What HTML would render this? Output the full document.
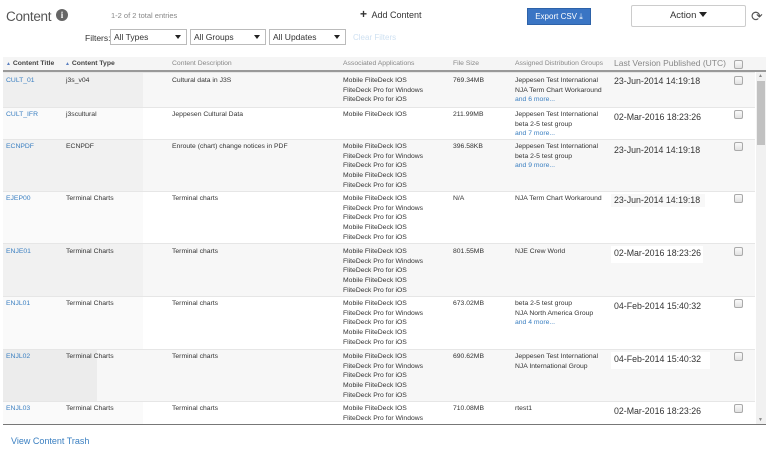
<!DOCTYPE html>
<html><head><meta charset="utf-8"><style>
*{box-sizing:border-box;margin:0;padding:0}
body{width:768px;height:459px;background:#fff;font-family:"Liberation Sans",Arial,sans-serif;color:#333;position:relative;overflow:hidden}
.a{position:absolute;white-space:nowrap}
.s{font-size:6.8px;line-height:9.7px}
.lnk{color:#3a7fc1}
.sel{position:absolute;top:29px;height:16px;border:1px solid #bbb;background:#fff;font-size:8.5px;line-height:14px;padding-left:3px}
.sel:after{content:"";position:absolute;right:5px;top:5px;border-left:3px solid transparent;border-right:3px solid transparent;border-top:4px solid #222}
.row{position:absolute;left:3px;width:752px;border-top:1px solid #e6e6e6}
.cb{position:absolute;left:734px;width:9px;height:9px;border:1px solid #aaa;border-radius:2px;background:linear-gradient(#fafafa,#e2e2e2)}
.dt{position:absolute;left:611px;font-size:8.8px;line-height:13px;padding:0 3px;background:#fff;white-space:nowrap}
</style></head><body>
<div class="a" style="left:6px;top:9px;font-size:13.5px;color:#555;letter-spacing:-0.3px">Content</div>
<div class="a" style="left:56px;top:9px;width:12px;height:12px;border-radius:50%;background:#666;color:#fff;font-size:9px;font-weight:bold;text-align:center;line-height:12px;font-family:'Liberation Serif',serif">i</div>
<div class="a" style="left:111px;top:11px;font-size:7.5px;color:#888">1-2 of 2 total entries</div>
<div class="a" style="left:360px;top:10px;font-size:9px;color:#333"><b style="font-size:12px;line-height:9px">+</b>&nbsp; Add Content</div>
<div class="a" style="left:527px;top:8px;width:64px;height:17px;background:#3a75c4;border:1px solid #2d62a8;color:#fff;font-size:8px;line-height:15px;text-align:center">Export CSV ⤓</div>
<div class="a" style="left:631px;top:5px;width:115px;height:22px;border:1px solid #ccc;border-radius:2px;font-size:9.5px;line-height:20px;text-align:center">Action <span style="display:inline-block;width:0;height:0;border-left:4px solid transparent;border-right:4px solid transparent;border-top:5px solid #222;vertical-align:1px"></span></div>
<div class="a" style="left:751px;top:8px;font-size:14px;color:#555">⟳</div>
<div class="a" style="left:85px;top:33px;font-size:8.5px">Filters:</div>
<div class="sel" style="left:110px;width:77px">All Types</div>
<div class="sel" style="left:190px;width:76px">All Groups</div>
<div class="sel" style="left:269px;width:77px">All Updates</div>
<div class="a" style="left:353px;top:33px;font-size:8px;color:#cfe1f2">Clear Filters</div>

<div class="a" style="left:3px;top:57px;width:763px;height:15px;background:#f5f5f5;border-bottom:2px solid #999"></div>
<div class="a s" style="left:6px;top:59px;color:#444;font-weight:bold"><span style="color:#5a7fc0;font-size:5px">▲</span> Content Title</div>
<div class="a s" style="left:65px;top:59px;color:#444;font-weight:bold"><span style="color:#5a7fc0;font-size:5px">▲</span> Content Type</div>
<div class="a s" style="left:172px;top:59px;color:#888">Content Description</div>
<div class="a s" style="left:343px;top:59px;color:#888">Associated Applications</div>
<div class="a s" style="left:453px;top:59px;color:#888">File Size</div>
<div class="a s" style="left:515px;top:59px;color:#888">Assigned Distribution Groups</div>
<div class="a" style="left:614px;top:58px;font-size:8.5px;line-height:11px;color:#888">Last Version Published (UTC)</div>
<div class="cb" style="top:60px"></div>

<div class="row" style="top:72px;height:35px;background:#f7f7f7"><div class="a" style="left:0;top:0;width:140px;height:100%;background:#efefef"></div></div>
<div class="row" style="top:107px;height:32px;background:#fff"><div class="a" style="left:0;top:0;width:140px;height:100%;background:#fafafa"></div></div>
<div class="row" style="top:139px;height:52px;background:#f7f7f7"><div class="a" style="left:0;top:0;width:140px;height:100%;background:#f1f1f1"></div></div>
<div class="row" style="top:191px;height:52px;background:#fff"><div class="a" style="left:0;top:0;width:140px;height:100%;background:#fafafa"></div></div>
<div class="row" style="top:243px;height:53px;background:#f7f7f7"><div class="a" style="left:0;top:0;width:140px;height:100%;background:#f1f1f1"></div></div>
<div class="row" style="top:296px;height:53px;background:#fff"><div class="a" style="left:0;top:0;width:140px;height:100%;background:#fafafa"></div></div>
<div class="row" style="top:349px;height:52px;background:#f7f7f7"><div class="a" style="left:0;top:0;width:94px;height:100%;background:#ececec"></div></div>
<div class="row" style="top:401px;height:23px;background:#fff"><div class="a" style="left:0;top:0;width:140px;height:100%;background:#fafafa"></div></div>
<div class="a" style="left:3px;top:424px;width:763px;height:1px;background:#777"></div>

<div class="a s lnk" style="left:6px;top:76px">CULT_01</div>
<div class="a s" style="left:66px;top:76px">j3s_v04</div>
<div class="a s" style="left:172px;top:76px">Cultural data in J3S</div>
<div class="a s" style="left:343px;top:76px">Mobile FliteDeck IOS<br>FliteDeck Pro for Windows<br>FliteDeck Pro for iOS</div>
<div class="a s" style="left:453px;top:76px">769.34MB</div>
<div class="a s" style="left:515px;top:76px">Jeppesen Test International<br>NJA Term Chart Workaround<br><span class="lnk">and 6 more...</span></div>
<div class="dt" style="top:75px;background:none">23-Jun-2014 14:19:18</div>
<div class="cb" style="top:76px"></div>

<div class="a s lnk" style="left:6px;top:110px">CULT_IFR</div>
<div class="a s" style="left:66px;top:110px">j3scultural</div>
<div class="a s" style="left:172px;top:110px">Jeppesen Cultural Data</div>
<div class="a s" style="left:343px;top:110px">Mobile FliteDeck IOS</div>
<div class="a s" style="left:453px;top:110px">211.99MB</div>
<div class="a s" style="left:515px;top:110px">Jeppesen Test International<br>beta 2-5 test group<br><span class="lnk">and 7 more...</span></div>
<div class="dt" style="top:111px">02-Mar-2016 18:23:26</div>
<div class="cb" style="top:110px"></div>

<div class="a s lnk" style="left:6px;top:142px">ECNPDF</div>
<div class="a s" style="left:66px;top:142px">ECNPDF</div>
<div class="a s" style="left:172px;top:142px">Enroute (chart) change notices in PDF</div>
<div class="a s" style="left:343px;top:142px">Mobile FliteDeck IOS<br>FliteDeck Pro for Windows<br>FliteDeck Pro for iOS<br>Mobile FliteDeck IOS<br>FliteDeck Pro for iOS</div>
<div class="a s" style="left:453px;top:142px">396.58KB</div>
<div class="a s" style="left:515px;top:142px">Jeppesen Test International<br>beta 2-5 test group<br><span class="lnk">and 9 more...</span></div>
<div class="dt" style="top:144px;background:none">23-Jun-2014 14:19:18</div>
<div class="cb" style="top:142px"></div>

<div class="a s lnk" style="left:6px;top:194px">EJEP00</div>
<div class="a s" style="left:66px;top:194px">Terminal Charts</div>
<div class="a s" style="left:172px;top:194px">Terminal charts</div>
<div class="a s" style="left:343px;top:194px">Mobile FliteDeck IOS<br>FliteDeck Pro for Windows<br>FliteDeck Pro for iOS<br>Mobile FliteDeck IOS<br>FliteDeck Pro for iOS</div>
<div class="a s" style="left:453px;top:194px">N/A</div>
<div class="a s" style="left:515px;top:194px">NJA Term Chart Workaround</div>
<div class="dt" style="top:194px;background:#f8f8f8;width:94px">23-Jun-2014 14:19:18</div>
<div class="cb" style="top:194px"></div>

<div class="a s lnk" style="left:6px;top:247px">ENJE01</div>
<div class="a s" style="left:66px;top:247px">Terminal Charts</div>
<div class="a s" style="left:172px;top:247px">Terminal charts</div>
<div class="a s" style="left:343px;top:247px">Mobile FliteDeck IOS<br>FliteDeck Pro for Windows<br>FliteDeck Pro for iOS<br>Mobile FliteDeck IOS<br>FliteDeck Pro for iOS</div>
<div class="a s" style="left:453px;top:247px">801.55MB</div>
<div class="a s" style="left:515px;top:247px">NJE Crew World</div>
<div class="dt" style="top:246px;height:17px;line-height:15px;width:92px">02-Mar-2016 18:23:26</div>
<div class="cb" style="top:247px"></div>

<div class="a s lnk" style="left:6px;top:299px">ENJL01</div>
<div class="a s" style="left:66px;top:299px">Terminal Charts</div>
<div class="a s" style="left:172px;top:299px">Terminal charts</div>
<div class="a s" style="left:343px;top:299px">Mobile FliteDeck IOS<br>FliteDeck Pro for Windows<br>FliteDeck Pro for iOS<br>Mobile FliteDeck IOS<br>FliteDeck Pro for iOS</div>
<div class="a s" style="left:453px;top:299px">673.02MB</div>
<div class="a s" style="left:515px;top:299px">beta 2-5 test group<br>NJA North America Group<br><span class="lnk">and 4 more...</span></div>
<div class="dt" style="top:300px">04-Feb-2014 15:40:32</div>
<div class="cb" style="top:299px"></div>

<div class="a s lnk" style="left:6px;top:352px">ENJL02</div>
<div class="a s" style="left:66px;top:352px">Terminal Charts</div>
<div class="a s" style="left:172px;top:352px">Terminal charts</div>
<div class="a s" style="left:343px;top:352px">Mobile FliteDeck IOS<br>FliteDeck Pro for Windows<br>FliteDeck Pro for iOS<br>Mobile FliteDeck IOS<br>FliteDeck Pro for iOS</div>
<div class="a s" style="left:453px;top:352px">690.62MB</div>
<div class="a s" style="left:515px;top:352px">Jeppesen Test International<br>NJA International Group</div>
<div class="dt" style="top:352px;height:17px;line-height:15px;width:99px">04-Feb-2014 15:40:32</div>
<div class="cb" style="top:352px"></div>

<div class="a s lnk" style="left:6px;top:404px">ENJL03</div>
<div class="a s" style="left:66px;top:404px">Terminal Charts</div>
<div class="a s" style="left:172px;top:404px">Terminal charts</div>
<div class="a s" style="left:343px;top:404px">Mobile FliteDeck IOS<br>FliteDeck Pro for Windows</div>
<div class="a s" style="left:453px;top:404px">710.08MB</div>
<div class="a s" style="left:515px;top:404px">rtest1</div>
<div class="dt" style="top:405px;background:none">02-Mar-2016 18:23:26</div>
<div class="cb" style="top:404px"></div>

<div class="a" style="left:756px;top:72px;width:10px;height:352px;background:#f1f1f1"></div>
<div class="a" style="left:757px;top:81px;width:8px;height:64px;background:#c1c1c1"></div>
<div class="a" style="left:758px;top:73px;font-size:5px;color:#888">▲</div>
<div class="a" style="left:758px;top:417px;font-size:5px;color:#888">▼</div>

<div class="a lnk" style="left:11px;top:436px;font-size:9px;color:#3a7fc1">View Content Trash</div>
</body></html>
